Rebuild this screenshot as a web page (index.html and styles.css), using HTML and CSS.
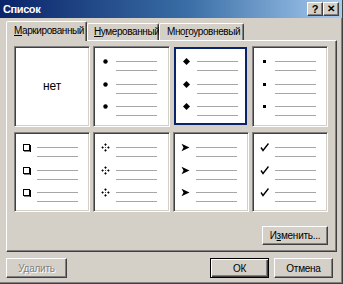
FILE: index.html
```html
<!DOCTYPE html>
<html>
<head>
<meta charset="utf-8">
<link rel="stylesheet" href="styles.css">
</head>
<body>
<div class="window">
  <div class="titlebar">
    <span class="title">Список</span>
    <div class="tb-buttons"><span class="tb-btn">?</span><span class="tb-btn tb-close">✕</span></div>
  </div>
  <div class="content">
    <div class="tabs">
      <div class="tab active"><u>М</u>аркированный</div>
      <div class="tab tab2"><u>Н</u>умерованный</div>
      <div class="tab tab3">Мно<u>г</u>оуровневый</div>
    </div>
    <div class="panel">
      <div class="grid">
        <div class="cell none">нет</div>
        <div class="cell">
          <div class="item"><span class="bullet"><svg viewBox="0 0 9 9" width="9" height="9"><circle cx="4.5" cy="4.5" r="2.2" fill="#000"/></svg></span><span class="lines"><i></i><i></i></span></div>
          <div class="item"><span class="bullet"><svg viewBox="0 0 9 9" width="9" height="9"><circle cx="4.5" cy="4.5" r="2.2" fill="#000"/></svg></span><span class="lines"><i></i><i></i></span></div>
          <div class="item"><span class="bullet"><svg viewBox="0 0 9 9" width="9" height="9"><circle cx="4.5" cy="4.5" r="2.2" fill="#000"/></svg></span><span class="lines"><i></i><i></i></span></div>
        </div>
        <div class="cell selected">
          <div class="item"><span class="bullet"><svg viewBox="0 0 9 9" width="9" height="9"><polygon points="4.5,1 8,4.5 4.5,8 1,4.5" fill="#000"/></svg></span><span class="lines"><i></i><i></i></span></div>
          <div class="item"><span class="bullet"><svg viewBox="0 0 9 9" width="9" height="9"><polygon points="4.5,1 8,4.5 4.5,8 1,4.5" fill="#000"/></svg></span><span class="lines"><i></i><i></i></span></div>
          <div class="item"><span class="bullet"><svg viewBox="0 0 9 9" width="9" height="9"><polygon points="4.5,1 8,4.5 4.5,8 1,4.5" fill="#000"/></svg></span><span class="lines"><i></i><i></i></span></div>
        </div>
        <div class="cell">
          <div class="item"><span class="bullet"><svg viewBox="0 0 9 9" width="9" height="9"><rect x="3" y="3" width="3" height="3" fill="#000"/></svg></span><span class="lines"><i></i><i></i></span></div>
          <div class="item"><span class="bullet"><svg viewBox="0 0 9 9" width="9" height="9"><rect x="3" y="3" width="3" height="3" fill="#000"/></svg></span><span class="lines"><i></i><i></i></span></div>
          <div class="item"><span class="bullet"><svg viewBox="0 0 9 9" width="9" height="9"><rect x="3" y="3" width="3" height="3" fill="#000"/></svg></span><span class="lines"><i></i><i></i></span></div>
        </div>
        <div class="cell">
          <div class="item"><span class="bullet"><svg viewBox="0 0 9 9" width="9" height="9"><rect x="1.5" y="1.5" width="6" height="6" fill="#fff" stroke="#000"/><path d="M8.5 2v7H2" fill="none" stroke="#000"/></svg></span><span class="lines"><i></i><i></i></span></div>
          <div class="item"><span class="bullet"><svg viewBox="0 0 9 9" width="9" height="9"><rect x="1.5" y="1.5" width="6" height="6" fill="#fff" stroke="#000"/><path d="M8.5 2v7H2" fill="none" stroke="#000"/></svg></span><span class="lines"><i></i><i></i></span></div>
          <div class="item"><span class="bullet"><svg viewBox="0 0 9 9" width="9" height="9"><rect x="1.5" y="1.5" width="6" height="6" fill="#fff" stroke="#000"/><path d="M8.5 2v7H2" fill="none" stroke="#000"/></svg></span><span class="lines"><i></i><i></i></span></div>
        </div>
        <div class="cell">
          <div class="item"><span class="bullet"><svg viewBox="0 0 9 9" width="9" height="9"><g fill="#000"><polygon points="4.5,0.3 5.8,1.6 4.5,2.9 3.2,1.6"/><polygon points="4.5,6.1 5.8,7.4 4.5,8.7 3.2,7.4"/><polygon points="1.6,3.2 2.9,4.5 1.6,5.8 0.3,4.5"/><polygon points="7.4,3.2 8.7,4.5 7.4,5.8 6.1,4.5"/></g><rect x="4" y="4" width="1" height="1" fill="#555"/></svg></span><span class="lines"><i></i><i></i></span></div>
          <div class="item"><span class="bullet"><svg viewBox="0 0 9 9" width="9" height="9"><g fill="#000"><polygon points="4.5,0.3 5.8,1.6 4.5,2.9 3.2,1.6"/><polygon points="4.5,6.1 5.8,7.4 4.5,8.7 3.2,7.4"/><polygon points="1.6,3.2 2.9,4.5 1.6,5.8 0.3,4.5"/><polygon points="7.4,3.2 8.7,4.5 7.4,5.8 6.1,4.5"/></g><rect x="4" y="4" width="1" height="1" fill="#555"/></svg></span><span class="lines"><i></i><i></i></span></div>
          <div class="item"><span class="bullet"><svg viewBox="0 0 9 9" width="9" height="9"><g fill="#000"><polygon points="4.5,0.3 5.8,1.6 4.5,2.9 3.2,1.6"/><polygon points="4.5,6.1 5.8,7.4 4.5,8.7 3.2,7.4"/><polygon points="1.6,3.2 2.9,4.5 1.6,5.8 0.3,4.5"/><polygon points="7.4,3.2 8.7,4.5 7.4,5.8 6.1,4.5"/></g><rect x="4" y="4" width="1" height="1" fill="#555"/></svg></span><span class="lines"><i></i><i></i></span></div>
        </div>
        <div class="cell">
          <div class="item"><span class="bullet"><svg viewBox="0 0 9 9" width="9" height="9"><polygon points="0.5,0.8 8.5,4.5 0.5,8.2 2.5,4.5" fill="#000"/></svg></span><span class="lines"><i></i><i></i></span></div>
          <div class="item"><span class="bullet"><svg viewBox="0 0 9 9" width="9" height="9"><polygon points="0.5,0.8 8.5,4.5 0.5,8.2 2.5,4.5" fill="#000"/></svg></span><span class="lines"><i></i><i></i></span></div>
          <div class="item"><span class="bullet"><svg viewBox="0 0 9 9" width="9" height="9"><polygon points="0.5,0.8 8.5,4.5 0.5,8.2 2.5,4.5" fill="#000"/></svg></span><span class="lines"><i></i><i></i></span></div>
        </div>
        <div class="cell">
          <div class="item"><span class="bullet"><svg viewBox="0 0 9 9" width="9" height="9"><path d="M1 4.5l2 3L8.5 0.5" fill="none" stroke="#000" stroke-width="1.4"/></svg></span><span class="lines"><i></i><i></i></span></div>
          <div class="item"><span class="bullet"><svg viewBox="0 0 9 9" width="9" height="9"><path d="M1 4.5l2 3L8.5 0.5" fill="none" stroke="#000" stroke-width="1.4"/></svg></span><span class="lines"><i></i><i></i></span></div>
          <div class="item"><span class="bullet"><svg viewBox="0 0 9 9" width="9" height="9"><path d="M1 4.5l2 3L8.5 0.5" fill="none" stroke="#000" stroke-width="1.4"/></svg></span><span class="lines"><i></i><i></i></span></div>
        </div>
      </div>
      <div class="panel-actions"><button class="btn btn-change">И<u>з</u>менить...</button></div>
    </div>
    <div class="footer">
      <button class="btn btn-delete" disabled>Удалить</button>
      <span class="spacer"></span>
      <button class="btn btn-default">ОК</button>
      <button class="btn btn-cancel">Отмена</button>
    </div>
  </div>
</div>
</body>
</html>
```
FILE: styles.css
```css
* { box-sizing: border-box; }
html, body { margin: 0; padding: 0; }
body {
  background: #d4d0c8;
  font-family: "Liberation Sans", Arial, sans-serif;
  font-size: 10px;
  letter-spacing: -0.25px;
  color: #000;
}
.window {
  width: 343px;
  height: 284px;
  background: #d4d0c8;
  border-right: 1px solid #404040;
  border-bottom: 1px solid #404040;
  box-shadow: inset -1px -1px #808080;
  display: flex;
  flex-direction: column;
}
.titlebar {
  height: 18px;
  background: linear-gradient(to right, #0a246a 0%, #3a6ea5 55%, #a6caf0 100%);
  display: flex;
  align-items: center;
  justify-content: space-between;
  padding: 0 3px 0 3px;
}
.title {
  color: #fff;
  font-weight: bold;
  font-size: 11px;
  letter-spacing: -0.4px;
}
.tb-buttons { display: flex; }
.tb-btn {
  width: 16px;
  height: 14px;
  background: #d4d0c8;
  border: 1px solid;
  border-color: #fff #404040 #404040 #fff;
  box-shadow: inset -1px -1px #808080;
  font-weight: bold;
  font-size: 11px;
  line-height: 12px;
  text-align: center;
  color: #000;
  letter-spacing: 0;
}
.tb-close { font-size: 10px; }
.content {
  flex: 1;
  display: flex;
  flex-direction: column;
  padding: 3px 6px 0 6px;
}
.tabs {
  display: flex;
  align-items: flex-end;
  height: 19px;
  padding-left: 2px;
  position: relative;
  z-index: 1;
  letter-spacing: -0.4px;
}
.tab {
  flex-shrink: 0;
  height: 17px;
  border: 1px solid;
  border-bottom: none;
  border-color: #fff #404040 transparent #fff;
  box-shadow: inset -1px 0 #808080;
  border-radius: 2px 2px 0 0;
  padding: 2px 0 0 6px;
  background: #d4d0c8;
  white-space: nowrap;
}
.tab.active {
  height: 20px;
  width: 81px;
  margin-bottom: -1px;
  margin-left: -2px;
  padding: 3px 0 0 7px;
}
.tab2 { width: 72px; padding-left: 6px; }
.tab3 { width: 85px; padding-left: 7px; }
.panel {
  width: 331px;
  height: 212px;
  border: 1px solid;
  border-color: #fff #404040 #404040 #fff;
  box-shadow: inset -1px -1px #808080;
  padding: 5px 0 0 7px;
  display: flex;
  flex-direction: column;
}
.grid {
  width: 314px;
  display: grid;
  grid-template-columns: repeat(4, 1fr);
  grid-template-rows: 81px 80px;
  column-gap: 3px;
  row-gap: 5px;
}
.cell {
  background: #fff;
  border: 1px solid;
  border-color: #808080 #fff #fff #808080;
  box-shadow: inset 1px 1px #404040, inset -1px -1px #d4d0c8;
  padding-top: 7px;
  display: flex;
  flex-direction: column;
}
.cell.none {
  align-items: center;
  justify-content: center;
  padding: 0 0 2px 0;
  font-size: 12px;
  letter-spacing: 0;
}
.cell.selected {
  margin: 1px 2px 2px 1px;
  border: 2px solid #0a246a;
  box-shadow: none;
  padding-top: 5px;
}
.item {
  height: 22.5px;
  display: flex;
  align-items: flex-start;
}
.bullet {
  width: 22px;
  height: 15px;
  display: flex;
  align-items: center;
  justify-content: center;
  padding-left: 1px;
}
.bullet svg { display: block; }
.selected .bullet { width: 21px; }
.lines {
  width: 41px;
  display: flex;
  flex-direction: column;
  padding-top: 7px;
  gap: 8px;
}
.lines i {
  display: block;
  height: 1px;
  background: #a6a6a6;
}
.panel-actions {
  display: flex;
  justify-content: flex-end;
  width: 314px;
  margin-top: 14px;
}
.btn {
  font-family: "Liberation Sans", Arial, sans-serif;
  font-size: 10px;
  letter-spacing: -0.25px;
  color: #000;
  background: #d4d0c8;
  border: 1px solid;
  border-color: #fff #404040 #404040 #fff;
  box-shadow: inset -1px -1px #808080;
  padding: 0;
  margin: 0;
  height: 19px;
  text-align: center;
}
.btn-change { width: 66px; height: 19px; }
.footer {
  display: flex;
  align-items: center;
  margin-top: 6px;
  padding-right: 1px;
}
.spacer { flex: 1; }
.btn-delete {
  width: 61px;
  height: 20px;
  color: #808080;
  text-shadow: 1px 1px #fff;
}
.btn-default {
  width: 59px;
  height: 20px;
  border: 1px solid #000;
  box-shadow: inset 1px 1px #fff, inset -1px -1px #404040, inset -2px -2px #808080;
  margin-right: 5px;
}
.btn-cancel { width: 59px; height: 20px; margin-right: 2px; }
u { text-decoration: underline; text-underline-offset: 1px; }
```
